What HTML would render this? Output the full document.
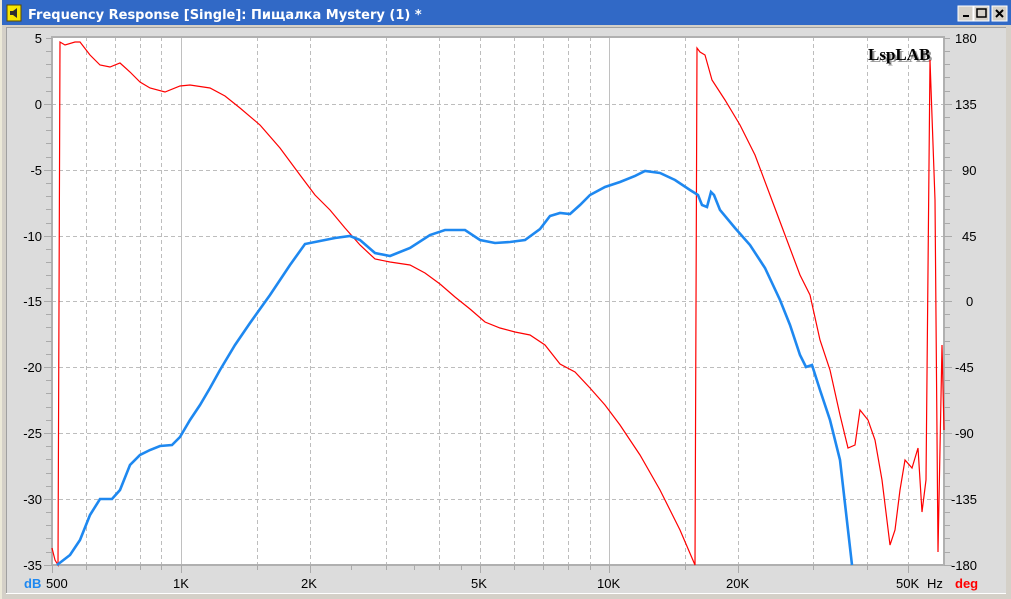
<!DOCTYPE html>
<html><head><meta charset="utf-8"><style>
html,body{margin:0;padding:0;width:1011px;height:599px;overflow:hidden;background:#d4d0c8;font-family:"Liberation Sans",sans-serif}
</style></head><body>
<svg width="1011" height="599" xmlns="http://www.w3.org/2000/svg" style="position:absolute;left:0;top:0">
<rect x="0" y="0" width="1011" height="599" fill="#ece9d8"/>
<rect x="2" y="0" width="1009" height="599" fill="#d4d0c8"/>
<rect x="6" y="27" width="1000" height="566" fill="#dcdcdc"/>
<line x1="6" y1="27.5" x2="1006" y2="27.5" stroke="#a0a0a0"/>
<line x1="6.5" y1="27" x2="6.5" y2="593" stroke="#a0a0a0"/>
<line x1="6" y1="593.5" x2="1006" y2="593.5" stroke="#fff"/>
<!-- title bar -->
<rect x="2" y="0" width="1009" height="25" fill="#3169c6"/>
<rect x="7" y="5" width="14" height="16" fill="#f6e600" stroke="#5a4a00"/>
<path d="M10 11h3l4-3v10l-4-3h-3z" fill="#303030"/>
<text x="28" y="19" font-family="DejaVu Sans,sans-serif" font-weight="bold" font-size="13" fill="#fff">Frequency Response [Single]: Пищалка Mystery (1) *</text>
<g>
<rect x="958" y="6" width="15" height="15" fill="#d4d0c8" stroke="#fff"/><rect x="963" y="15" width="6" height="2" fill="#000"/>
<rect x="974" y="6" width="15" height="15" fill="#d4d0c8" stroke="#fff"/><rect x="977" y="9" width="9" height="8" fill="none" stroke="#000" stroke-width="1.5"/>
<rect x="992" y="6" width="15" height="15" fill="#d4d0c8" stroke="#fff"/><path d="M996 10l7 7M1003 10l-7 7" stroke="#000" stroke-width="2"/>
</g>
<!-- plot -->
<rect x="52" y="37" width="892" height="528" fill="#fff"/>
<g stroke="#bdbdbd" stroke-dasharray="4,3" stroke-width="1">
<line x1="52" x2="944" y1="104.5" y2="104.5"/><line x1="52" x2="944" y1="170.5" y2="170.5"/><line x1="52" x2="944" y1="236.5" y2="236.5"/><line x1="52" x2="944" y1="301.5" y2="301.5"/><line x1="52" x2="944" y1="367.5" y2="367.5"/><line x1="52" x2="944" y1="433.5" y2="433.5"/><line x1="52" x2="944" y1="499.5" y2="499.5"/>
<line x1="86.5" x2="86.5" y1="37" y2="565"/><line x1="115.5" x2="115.5" y1="37" y2="565"/><line x1="140.5" x2="140.5" y1="37" y2="565"/><line x1="161.5" x2="161.5" y1="37" y2="565"/>
<line x1="257.5" x2="257.5" y1="37" y2="565"/><line x1="310.5" x2="310.5" y1="37" y2="565"/><line x1="386.5" x2="386.5" y1="37" y2="565"/><line x1="439.5" x2="439.5" y1="37" y2="565"/><line x1="480.5" x2="480.5" y1="37" y2="565"/><line x1="514.5" x2="514.5" y1="37" y2="565"/><line x1="543.5" x2="543.5" y1="37" y2="565"/><line x1="568.5" x2="568.5" y1="37" y2="565"/><line x1="590.5" x2="590.5" y1="37" y2="565"/>
<line x1="685.5" x2="685.5" y1="37" y2="565"/><line x1="738.5" x2="738.5" y1="37" y2="565"/><line x1="813.5" x2="813.5" y1="37" y2="565"/><line x1="867.5" x2="867.5" y1="37" y2="565"/><line x1="908.5" x2="908.5" y1="37" y2="565"/>
</g>
<line x1="181.5" x2="181.5" y1="37" y2="565" stroke="#c0c0c0"/>
<line x1="609.5" x2="609.5" y1="37" y2="565" stroke="#c0c0c0"/>
<rect x="52" y="37" width="892" height="528" fill="none" stroke="#b0b0b0" stroke-width="2"/>
<!-- ticks -->
<g stroke="#aaa">
<path d="M46 38.5h6M46 51.5h6M46 64.5h6M46 77.5h6M46 91.5h6M44 104.5h8M46 117.5h6M46 130.5h6M46 143.5h6M46 157.5h6M44 170.5h8M46 183.5h6M46 196.5h6M46 209.5h6M46 223.5h6M44 236.5h8M46 249.5h6M46 262.5h6M46 275.5h6M46 288.5h6M44 301.5h8M46 314.5h6M46 327.5h6M46 341.5h6M46 354.5h6M44 367.5h8M46 380.5h6M46 393.5h6M46 407.5h6M46 420.5h6M44 433.5h8M46 446.5h6M46 459.5h6M46 473.5h6M46 486.5h6M44 499.5h8M46 512.5h6M46 525.5h6M46 538.5h6M46 552.5h6M44 565.5h8"/>
<path d="M944 38.5h6M944 51.5h6M944 64.5h6M944 77.5h6M944 91.5h6M944 104.5h8M944 117.5h6M944 130.5h6M944 143.5h6M944 157.5h6M944 170.5h8M944 183.5h6M944 196.5h6M944 209.5h6M944 223.5h6M944 236.5h8M944 249.5h6M944 262.5h6M944 275.5h6M944 288.5h6M944 301.5h8M944 314.5h6M944 327.5h6M944 341.5h6M944 354.5h6M944 367.5h8M944 380.5h6M944 393.5h6M944 407.5h6M944 420.5h6M944 433.5h8M944 446.5h6M944 459.5h6M944 473.5h6M944 486.5h6M944 499.5h8M944 512.5h6M944 525.5h6M944 538.5h6M944 552.5h6M944 565.5h8"/>
<path d="M52.5 565v8M86.5 565v5M115.5 565v5M140.5 565v5M161.5 565v5M181.5 565v8M257.5 565v5M310.5 565v8M351.5 565v5M386.5 565v5M414.5 565v5M439.5 565v5M461.5 565v5M480.5 565v8M514.5 565v5M543.5 565v5M568.5 565v5M590.5 565v5M609.5 565v8M685.5 565v5M738.5 565v8M813.5 565v5M867.5 565v5M908.5 565v8"/>
</g>
<!-- labels -->
<g font-size="13" fill="#000" text-anchor="end">
<text x="42" y="43">5</text><text x="42" y="109">0</text><text x="42" y="175">-5</text><text x="42" y="241">-10</text><text x="42" y="306">-15</text><text x="42" y="372">-20</text><text x="42" y="438">-25</text><text x="42" y="504">-30</text><text x="42" y="570">-35</text>
</g>
<g font-size="13" fill="#000">
<text x="955" y="43">180</text><text x="955" y="109">135</text><text x="962" y="175">90</text><text x="962" y="241">45</text><text x="966" y="306">0</text><text x="955" y="372">-45</text><text x="955" y="438">-90</text><text x="951" y="504">-135</text><text x="951" y="570">-180</text>
</g>
<g font-size="13" fill="#000">
<text x="46" y="588">500</text><text x="173" y="588">1K</text><text x="301" y="588">2K</text><text x="471" y="588">5K</text><text x="597" y="588">10K</text><text x="726" y="588">20K</text><text x="896" y="588">50K</text><text x="927" y="588">Hz</text>
</g>
<text x="24" y="588" font-size="13" font-weight="bold" fill="#1e88f0">dB</text>
<text x="955" y="588" font-size="13" font-weight="bold" fill="#ff0000">deg</text>
<!-- logo -->
<text x="870" y="62" font-family="Liberation Serif,serif" font-weight="bold" font-size="17" fill="#999">LspLAB</text>
<text x="868" y="60" font-family="Liberation Serif,serif" font-weight="bold" font-size="17" fill="#000">LspLAB</text>
<!-- curves -->
<polyline fill="none" stroke="#ff0000" stroke-width="1.2" points="52,548 55,560 58,565 60,42 65,45 75,42 80,42 90,55 100,65 110,67 120,63 130,72 140,82 150,88 165,92 180,86 190,85 210,88 225,96 240,108 260,125 280,148 300,175 315,195 330,210 345,228 360,245 375,259 390,262 410,265 425,273 440,284 455,297 470,309 485,322 500,328 515,332 530,335 545,345 560,364 575,372 590,388 605,405 620,425 640,455 660,490 680,530 695,565 697,48 700,52 705,55 712,80 725,100 740,125 755,155 770,195 785,235 800,275 810,295 820,340 830,370 840,415 848,448 855,445 860,410 868,420 875,440 882,480 890,545 895,530 900,490 905,460 912,468 918,448 922,512 926,480 930,60 935,200 938,552 942,345 944,430"/>
<polyline fill="none" stroke="#1e88f0" stroke-width="2.6" points="57,565 70,555 80,540 90,515 100,499 112,499 120,490 130,465 140,455 150,450 160,446 172,445 180,437 190,420 200,405 210,388 220,370 235,345 250,323 270,295 290,265 305,244 320,241 335,238 350,236 360,240 375,253 390,256 410,248 430,235 445,230 465,230 480,240 495,243 510,242 525,240 540,229 550,216 560,213 570,214 580,205 590,195 605,187 620,182 635,176 645,171 660,173 675,180 690,190 698,195 702,205 707,207 711,192 714,195 720,210 735,228 750,245 765,268 780,300 790,325 800,355 806,367 812,365 820,390 830,420 840,460 848,530 852,565"/>
</svg>
</body></html>
